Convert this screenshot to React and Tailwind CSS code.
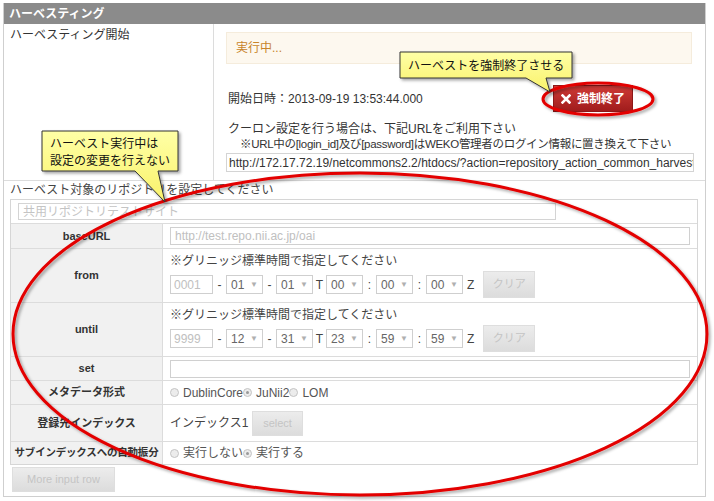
import React from "react";

function Sel({ v }) {
  return (
    <div className="flex h-[19px] w-[37px] items-center justify-between border border-[#cfcfcf] bg-white pl-[4px] pr-[4px] text-[12px] text-[#666]">
      <span>{v}</span>
      <span className="text-[8px] text-[#b0b0b0]">▼</span>
    </div>
  );
}

function Sep({ c }) {
  return <span className="w-[13px] text-center text-[12px] text-[#444]">{c}</span>;
}

function Radio({ on }) {
  return (
    <span className="mr-[4px] flex h-[9px] w-[9px] items-center justify-center rounded-full border border-[#c4c4c4] bg-[#ececec]">
      {on && <span className="h-[3px] w-[3px] rounded-full bg-[#999]" />}
    </span>
  );
}

function Row({ label, h, tight, children }) {
  return (
    <div className={`flex border-t border-[#dcdcdc] ${h}`}>
      <div
        className={`flex w-[152px] shrink-0 items-center justify-center whitespace-nowrap border-r border-[#dcdcdc] bg-[#f1f1f1] font-bold text-[#333] ${
          tight ? "text-[10.5px] tracking-[-0.2px]" : "text-[11px]"
        }`}
      >
        {label}
      </div>
      <div className="flex flex-1 flex-col justify-center pl-[7px] pr-[5px]">{children}</div>
    </div>
  );
}

function DateRow({ label, year, vals }) {
  return (
    <Row label={label} h="h-[54px]">
      <div className="whitespace-nowrap pb-[2px] text-[12px] leading-[16px] text-[#444]">※グリニッジ標準時間で指定してください</div>
      <div className="flex items-center">
        <div className="flex h-[19px] w-[43px] items-center border border-[#cfcfcf] pl-[3px] text-[12px] text-[#c0c0c0]">{year}</div>
        <Sep c="-" />
        <Sel v={vals[0]} />
        <Sep c="-" />
        <Sel v={vals[1]} />
        <Sep c="T" />
        <Sel v={vals[2]} />
        <Sep c=":" />
        <Sel v={vals[3]} />
        <Sep c=":" />
        <Sel v={vals[4]} />
        <span className="ml-[4px] text-[12px] text-[#444]">Z</span>
        <div className="ml-[9px] flex h-[27px] w-[52px] items-center justify-center border border-[#dedede] bg-gradient-to-b from-[#ececec] to-[#dcdcdc] text-[11px] text-[#c4c4c4]">
          クリア
        </div>
      </div>
    </Row>
  );
}

export default function App() {
  return (
    <div className="relative h-[501px] w-[714px] overflow-hidden bg-white pl-[3px] pt-[3px] font-['Liberation_Sans','Noto_Sans_CJK_JP',sans-serif] text-[#333]">
      <div className="w-[703px] border-x border-b border-[#cfcfcf] pb-[4px]">
        <div className="flex h-[21px] items-center bg-[#8b8b8b] pl-[5px] text-[12px] font-bold text-white">
          ハーベスティング
        </div>

        <div className="flex border-b border-[#dcdcdc]">
          <div className="w-[210px] shrink-0 border-r border-[#dcdcdc] pl-[6px] pt-[3px] text-[12px] leading-[16px]">
            ハーベスティング開始
          </div>
          <div className="flex-1 pb-[8px] pl-[12px] pt-[8px]">
            <div className="flex h-[32px] w-[466px] items-center border border-[#f5ecdc] bg-[#fdf8ef] pl-[9px] text-[12px] text-[#c8842a]">
              実行中...
            </div>
            <div className="mt-[21px] flex h-[27px] items-center">
              <span className="w-[327px] pl-[2px] text-[12px]">開始日時：2013-09-19 13:53:44.000</span>
              <div className="flex h-[27px] w-[80px] items-center justify-center gap-[6px] border border-[#8c1717] bg-gradient-to-b from-[#cf3a36] to-[#a01c1c] text-[12px] font-bold text-white">
                <svg width="10" height="10" viewBox="0 0 10 10">
                  <path d="M1.5 1.5 L8.5 8.5 M8.5 1.5 L1.5 8.5" stroke="#fff" strokeWidth="2.6" strokeLinecap="square" />
                </svg>
                <span>強制終了</span>
              </div>
            </div>
            <div className="mt-[10px] whitespace-nowrap pl-[2px] text-[12px] leading-[15px]">クーロン設定を行う場合は、下記URLをご利用下さい</div>
            <div className="whitespace-nowrap pl-[14px] text-[11.5px] leading-[15px] tracking-[-0.3px]">
              ※URL中の[login_id]及び[password]はWEKO管理者のログイン情報に置き換えて下さい
            </div>
            <input
              readOnly
              value="http://172.17.72.19/netcommons2.2/htdocs/?action=repository_action_common_harvesting"
              className="mt-[1px] block h-[19px] w-[468px] border border-[#d4d4d4] pl-[2px] text-[12px] text-[#333] outline-none"
            />
          </div>
        </div>

        <div className="flex h-[18px] items-center pl-[6px] text-[12px] text-[#444]">
          ハーベスト対象のリポジトリを設定してください
        </div>
        <div className="ml-[6px] w-[688px] border border-[#d6d6d6]">
          <div className="pb-[3px] pl-[7px] pt-[3px]">
            <div className="flex h-[17px] w-[538px] items-center border border-[#d4d4d4] pl-[4px] text-[12px] text-[#c4c4c4]">
              共用リポジトリテストサイト
            </div>
          </div>
          <Row label="baseURL" h="h-[25px]">
            <div className="flex h-[18px] w-[520px] items-center border border-[#d0d0d0] pl-[4px] text-[12px] text-[#c0c0c0]">
              http://test.repo.nii.ac.jp/oai
            </div>
          </Row>
          <DateRow label="from" year="0001" vals={["01", "01", "00", "00", "00"]} />
          <DateRow label="until" year="9999" vals={["12", "31", "23", "59", "59"]} />
          <Row label="set" h="h-[24px]">
            <div className="h-[18px] w-[520px] border border-[#d0d0d0]" />
          </Row>
          <Row label="メタデータ形式" h="h-[24px]">
            <div className="flex items-center text-[12px] text-[#555]">
              <Radio />
              <span>DublinCore</span>
              <Radio on />
              <span>JuNii2</span>
              <Radio />
              <span>LOM</span>
            </div>
          </Row>
          <Row label="登録先インデックス" h="h-[37px]">
            <div className="flex items-center text-[12px] text-[#444]">
              <span className="w-[82px]">インデックス1</span>
              <div className="flex h-[25px] w-[51px] items-center justify-center border border-[#dedede] bg-gradient-to-b from-[#ececec] to-[#dcdcdc] text-[11px] text-[#c4c4c4]">
                select
              </div>
            </div>
          </Row>
          <Row label="サブインデックスへの自動振分" h="h-[23px]" tight>
            <div className="flex items-center text-[12px] text-[#555]">
              <Radio />
              <span>実行しない</span>
              <Radio on />
              <span>実行する</span>
            </div>
          </Row>
        </div>
        <div className="ml-[8px] mt-[2px] flex h-[25px] w-[103px] items-center justify-center border border-[#dedede] bg-gradient-to-b from-[#ececec] to-[#dcdcdc] text-[11px] text-[#c4c4c4]">
          More input row
        </div>
      </div>

      <svg className="pointer-events-none absolute left-0 top-0" width="714" height="501" viewBox="0 0 714 501">
        <defs>
          <linearGradient id="cy" x1="0" y1="0" x2="0" y2="1">
            <stop offset="0" stopColor="#ffffa6" />
            <stop offset="1" stopColor="#f9f26a" />
          </linearGradient>
          <filter id="sh" x="-10%" y="-10%" width="130%" height="140%">
            <feDropShadow dx="2" dy="2" stdDeviation="1.5" floodColor="#000" floodOpacity="0.35" />
          </filter>
        </defs>
        <ellipse cx="360" cy="334" rx="347" ry="161" fill="none" stroke="#e30000" strokeWidth="3" filter="url(#sh)" />
        <ellipse cx="598" cy="99" rx="55" ry="16" fill="none" stroke="#e30000" strokeWidth="3" filter="url(#sh)" />
        <path d="M400 52 H572 V78 H546 L550 92 L526 78 H400 Z" fill="url(#cy)" stroke="#333" strokeWidth="1" filter="url(#sh)" />
        <text x="408" y="70" fontSize="12" fill="#111" fontFamily="'Liberation Sans','Noto Sans CJK JP',sans-serif">
          ハーベストを強制終了させる
        </text>
        <path d="M42 131 H178 V171 H158 L165 202 L135 171 H42 Z" fill="url(#cy)" stroke="#333" strokeWidth="1" filter="url(#sh)" />
        <text x="50" y="148" fontSize="12" fill="#111" fontFamily="'Liberation Sans','Noto Sans CJK JP',sans-serif">
          ハーベスト実行中は
        </text>
        <text x="50" y="165" fontSize="12" fill="#111" fontFamily="'Liberation Sans','Noto Sans CJK JP',sans-serif">
          設定の変更を行えない
        </text>
      </svg>
    </div>
  );
}
